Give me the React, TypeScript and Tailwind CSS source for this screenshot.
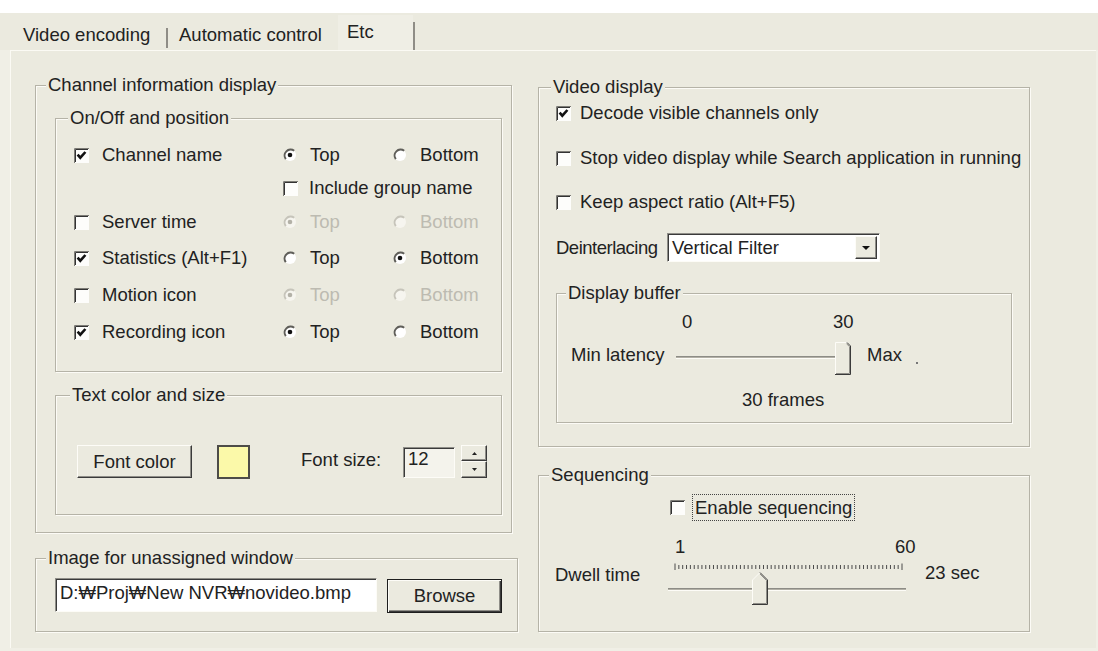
import React from 'react';

const Check = ({ checked = false }: { checked?: boolean }) => (
  <svg width="15" height="15" viewBox="0 0 15 15" className="shrink-0">
    <rect width="15" height="15" fill="#fdfdfb" />
    <path d="M0.5 15V0.5H15" stroke="#7d7c76" fill="none" />
    <path d="M1.5 14V1.5H14" stroke="#333" fill="none" />
    {checked && <path d="M3.6 6.6L6.3 9.7L11.4 4" stroke="#111" strokeWidth="2.6" fill="none" />}
  </svg>
);

const Radio = ({ on = false, off = false }: { on?: boolean; off?: boolean }) => (
  <svg width="14" height="14" viewBox="0 0 14 14" className="shrink-0">
    <circle cx="7" cy="7" r="6" fill={off ? '#f6f5ef' : '#ffffff'} />
    <path d="M2.8 11.2A6 6 0 0 1 11.2 2.8" stroke={off ? '#c6c4ba' : '#5f5e59'} strokeWidth="2" fill="none" />
    {on && <circle cx="7" cy="7" r="2.3" fill={off ? '#b3b1a7' : '#111'} />}
  </svg>
);

const Group = ({
  title,
  className = '',
  titleClass = '',
  children,
}: {
  title: string;
  className?: string;
  titleClass?: string;
  children?: React.ReactNode;
}) => (
  <div className={`border border-[#b5b3a7] shadow-[inset_1px_1px_0_#fcfbf6,1px_1px_0_#fcfbf6] ${className}`}>
    <div className={`-mt-[11px] w-fit bg-[#ebeadf] px-[2px] leading-[20px] whitespace-nowrap ${titleClass}`}>{title}</div>
    {children}
  </div>
);

const PosRow = ({
  label,
  checked = false,
  pos,
  disabled = false,
  className = '',
}: {
  label: string;
  checked?: boolean;
  pos: 'top' | 'bottom';
  disabled?: boolean;
  className?: string;
}) => (
  <div className={`flex h-[20px] items-center pl-[18px] ${className}`}>
    <div className="flex w-[209px] items-center gap-[13px] whitespace-nowrap">
      <Check checked={checked} />
      <span>{label}</span>
    </div>
    <div className={`flex w-[110px] items-center gap-[13px] ${disabled ? 'text-[#bdbbb1]' : ''}`}>
      <Radio on={pos === 'top'} off={disabled} />
      <span>Top</span>
    </div>
    <div className={`flex items-center gap-[13px] ${disabled ? 'text-[#bdbbb1]' : ''}`}>
      <Radio on={pos === 'bottom'} off={disabled} />
      <span>Bottom</span>
    </div>
  </div>
);

const CheckRow = ({ label, checked = false, className = '' }: { label: string; checked?: boolean; className?: string }) => (
  <div className={`flex h-[20px] items-center gap-[9px] pl-[17px] whitespace-nowrap ${className}`}>
    <Check checked={checked} />
    <span>{label}</span>
  </div>
);

const raised =
  'border border-t-[#fdfcf7] border-l-[#fdfcf7] border-r-[#3a3a3a] border-b-[#3a3a3a] shadow-[inset_-1px_-1px_0_#8f8e88] bg-[#ebeadf]';
const sunken =
  'border border-t-[#8f8e88] border-l-[#8f8e88] border-r-[#fdfcf7] border-b-[#fdfcf7] shadow-[inset_1px_1px_0_#3a3a3a]';

const Thumb = ({ x, y, h }: { x: number; y: number; h: number }) => {
  const r = x + 16;
  const b = y + h;
  return (
    <g>
      <polygon points={`${x},${y + 8} ${x + 8},${y} ${r},${y + 8} ${r},${b} ${x},${b}`} fill="#ebeadf" />
      <path d={`M${x + 0.5} ${b - 1}V${y + 8}L${x + 8} ${y + 0.5}`} stroke="#fdfcf7" fill="none" />
      <path d={`M${x + 8} ${y + 0.5}L${r - 0.5} ${y + 8}V${b - 0.5}H${x}`} stroke="#3a3a3a" fill="none" />
      <path d={`M${x + 8} ${y + 2}L${r - 1.5} ${y + 8.5}V${b - 1.5}H${x + 1}`} stroke="#8f8e88" fill="none" />
    </g>
  );
};

const ticks = Array.from({ length: 60 }, (_, i) => 7 + (i * 227) / 59);

export default function App() {
  return (
    <div className="h-[651px] w-[1098px] overflow-hidden bg-white font-['Liberation_Sans',Arial,sans-serif] text-[18.5px] leading-[20px] text-[#222]">
      <div className="mt-[13px] flex h-[638px] flex-col bg-[#f0efe6]">
        {/* tab strip */}
        <div className="flex h-[37px] bg-[#ebeadf] pl-[23px]">
          <span className="mt-[12px] w-[136px] whitespace-nowrap">Video encoding</span>
          <span className="ml-[7px] mt-[15px] h-[20px] w-[2px] bg-[#8f8d86]" />
          <span className="ml-[11px] mt-[12px] w-[150px] whitespace-nowrap">Automatic control</span>
          <div className="ml-[9px] mt-[2px] h-[36px] w-[75px] bg-[#efeee5] pl-[9px] pt-[7px]">Etc</div>
          <span className="mt-[9px] h-[28px] w-[2px] bg-[#8f8d86]" />
        </div>

        {/* panel */}
        <div className="ml-[10px] flex h-[598px] w-[1086px] border-l border-t border-[#fbfaf4] bg-[#ebeadf] pl-[24px]">
          {/* left column */}
          <div className="mt-[34px] flex w-[483px] flex-col">
            <Group title="Channel information display" className="h-[448px] w-[477px]" titleClass="ml-[10px]">
              <Group title="On/Off and position" className="ml-[19px] mt-[23px] h-[254px] w-[447px]" titleClass="ml-[12px]">
                <PosRow label="Channel name" checked pos="top" className="mt-[17px]" />
                <div className="mt-[13px] flex h-[20px] items-center gap-[11px] pl-[227px] whitespace-nowrap">
                  <Check />
                  <span>Include group name</span>
                </div>
                <PosRow label="Server time" pos="top" disabled className="mt-[14px]" />
                <PosRow label="Statistics (Alt+F1)" checked pos="bottom" className="mt-[16px]" />
                <PosRow label="Motion icon" pos="top" disabled className="mt-[17px]" />
                <PosRow label="Recording icon" checked pos="top" className="mt-[17px]" />
              </Group>

              <Group title="Text color and size" className="ml-[19px] mt-[23px] h-[120px] w-[447px]" titleClass="ml-[14px]">
                <div className="mt-[40px] flex items-start pl-[21px]">
                  <button className={`h-[33px] w-[115px] ${raised}`}>Font color</button>
                  <div className="ml-[25px] h-[34px] w-[33px] border-2 border-[#4d4c48] bg-[#fbf9a9]" />
                  <span className="ml-[51px] mt-[5px] w-[102px] whitespace-nowrap">Font size:</span>
                  <div className={`mt-[2px] h-[31px] w-[52px] bg-[#f4f3ec] pl-[4px] pt-[1px] ${sunken}`}>12</div>
                  <div className="ml-[6px] flex flex-col">
                    <div className={`flex h-[16px] w-[26px] items-center justify-center ${raised}`}>
                      <svg width="5" height="3" viewBox="0 0 5 3">
                        <path d="M0 3L2.5 0L5 3Z" fill="#222" />
                      </svg>
                    </div>
                    <div className={`flex h-[17px] w-[26px] items-center justify-center ${raised}`}>
                      <svg width="5" height="3" viewBox="0 0 5 3">
                        <path d="M0 0L2.5 3L5 0Z" fill="#222" />
                      </svg>
                    </div>
                  </div>
                </div>
              </Group>
            </Group>

            <Group title="Image for unassigned window" className="mt-[25px] h-[74px] w-[483px]" titleClass="ml-[10px]">
              <div className="mt-[10px] flex items-start pl-[19px]">
                <div className={`h-[34px] w-[322px] overflow-hidden whitespace-nowrap bg-white pl-[4px] pt-[4px] ${sunken}`}>
                  D:₩Proj₩New NVR₩novideo.bmp
                </div>
                <button className="ml-[10px] mt-[1px] h-[34px] w-[115px] border border-[#1e1e1e] bg-[#ebeadf] shadow-[inset_1px_1px_0_#fdfcf7,inset_-1px_-1px_0_#3a3a3a,inset_-2px_-2px_0_#8f8e88]">
                  Browse
                </button>
              </div>
            </Group>
          </div>

          {/* right column */}
          <div className="ml-[20px] mt-[36px] flex w-[492px] flex-col">
            <Group title="Video display" className="h-[360px] w-[492px]" titleClass="ml-[12px]">
              <CheckRow label="Decode visible channels only" checked className="mt-[6px]" />
              <CheckRow label="Stop video display while Search application in running" className="mt-[25px]" />
              <CheckRow label="Keep aspect ratio (Alt+F5)" className="mt-[24px]" />
              <div className="mt-[21px] flex h-[29px] items-center pl-[17px]">
                <span className="w-[111px] whitespace-nowrap tracking-[-0.5px]">Deinterlacing</span>
                <div className={`flex h-[29px] w-[213px] items-center justify-between bg-white pl-[4px] pr-[2px] ${sunken}`}>
                  <span className="whitespace-nowrap">Vertical Filter</span>
                  <div className={`flex h-[23px] w-[22px] items-center justify-center ${raised}`}>
                    <svg width="8" height="4" viewBox="0 0 8 4">
                      <path d="M0 0H8L4 4Z" fill="#111" />
                    </svg>
                  </div>
                </div>
              </div>

              <Group title="Display buffer" className="ml-[17px] mt-[31px] h-[130px] w-[456px]" titleClass="ml-[9px]">
                <div className="mt-[9px] flex h-[20px] pl-[125px]">
                  <span className="w-[151px]">0</span>
                  <span>30</span>
                </div>
                <div className="mt-[10px] flex h-[33px] items-start pl-[14px]">
                  <span className="mt-[3px] w-[105px] whitespace-nowrap">Min latency</span>
                  <svg width="175" height="33" viewBox="0 0 175 33" className="shrink-0">
                    <path d="M0 14.5H160" stroke="#8d8c86" />
                    <path d="M0 15.5H160" stroke="#b2b0a6" />
                    <path d="M0 16.5H160" stroke="#fdfcf7" />
                    <rect x="159" y="0" width="16" height="33" fill="#ebeadf" />
                    <path d="M159.5 32V0.5H171" stroke="#fdfcf7" fill="none" />
                    <path d="M171 0.5L174.5 4V32.5H159" stroke="#3a3a3a" fill="none" />
                    <path d="M170.5 1.8L173.5 4.6V31.5H160" stroke="#8f8e88" fill="none" />
                  </svg>
                  <span className="ml-[16px] mt-[3px]">Max</span>
                  <span className="ml-[14px] mt-[20px] h-[2px] w-[2px] bg-[#777]" />
                </div>
                <div className="mt-[15px] h-[20px] pl-[185px]">30 frames</div>
              </Group>
            </Group>

            <Group title="Sequencing" className="mt-[28px] h-[157px] w-[492px]" titleClass="ml-[10px]">
              <div className="mt-[9px] flex h-[27px] items-center pl-[131px]">
                <Check />
                <span className="ml-[7px] h-[27px] whitespace-nowrap border border-dotted border-[#444] px-[2px] leading-[25px]">
                  Enable sequencing
                </span>
              </div>
              <div className="mt-[16px] flex h-[20px] pl-[136px]">
                <span className="w-[220px]">1</span>
                <span>60</span>
              </div>
              <div className="mt-[5px] flex h-[44px] items-start pl-[16px]">
                <span className="mt-[3px] w-[113px] whitespace-nowrap">Dwell time</span>
                <svg width="238" height="44" viewBox="0 0 238 44" className="shrink-0">
                  {ticks.map((x, i) => (
                    <line
                      key={i}
                      x1={x}
                      x2={x}
                      y1={i === 0 || i === 59 ? 1.5 : 3}
                      y2={i === 0 || i === 59 ? 8 : 7}
                      stroke="#4a4a4a"
                      strokeWidth="1"
                    />
                  ))}
                  <path d="M0 26.5H238" stroke="#8d8c86" />
                  <path d="M0 27.5H238" stroke="#b2b0a6" />
                  <path d="M0 28.5H238" stroke="#fdfcf7" />
                  <Thumb x={84} y={10} h={33} />
                </svg>
                <span className="ml-[19px] mt-[1px] whitespace-nowrap">23 sec</span>
              </div>
            </Group>
          </div>
        </div>
      </div>
    </div>
  );
}
